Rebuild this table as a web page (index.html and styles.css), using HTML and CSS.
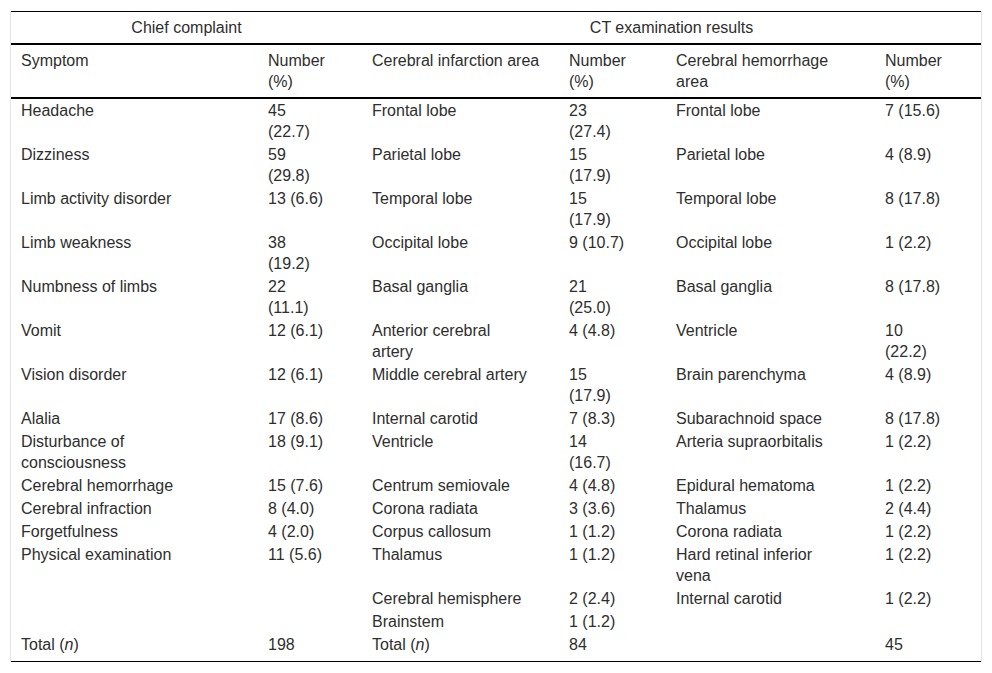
FILE: index.html
```html
<!DOCTYPE html>
<html lang="en">
<head>
<meta charset="utf-8">
<title>Table</title>
<link rel="stylesheet" href="styles.css">
</head>
<body>
<div class="wrap">
<table class="data">
<colgroup>
<col class="c1"><col class="c2"><col class="c3"><col class="c4"><col class="c5"><col class="c6">
</colgroup>
<thead>
<tr class="group">
<th colspan="2">Chief complaint</th>
<th colspan="4">CT examination results</th>
</tr>
<tr class="heads">
<th>Symptom</th><th>Number (%)</th><th>Cerebral infarction area</th><th>Number (%)</th><th>Cerebral hemorrhage area</th><th>Number (%)</th>
</tr>
</thead>
<tbody>
<tr><td>Headache</td><td>45 (22.7)</td><td>Frontal lobe</td><td>23 (27.4)</td><td>Frontal lobe</td><td>7 (15.6)</td></tr>
<tr><td>Dizziness</td><td>59 (29.8)</td><td>Parietal lobe</td><td>15 (17.9)</td><td>Parietal lobe</td><td>4 (8.9)</td></tr>
<tr><td>Limb activity disorder</td><td>13 (6.6)</td><td>Temporal lobe</td><td>15 (17.9)</td><td>Temporal lobe</td><td>8 (17.8)</td></tr>
<tr><td>Limb weakness</td><td>38 (19.2)</td><td>Occipital lobe</td><td>9 (10.7)</td><td>Occipital lobe</td><td>1 (2.2)</td></tr>
<tr><td>Numbness of limbs</td><td>22 (11.1)</td><td>Basal ganglia</td><td>21 (25.0)</td><td>Basal ganglia</td><td>8 (17.8)</td></tr>
<tr><td>Vomit</td><td>12 (6.1)</td><td>Anterior cerebral artery</td><td>4 (4.8)</td><td>Ventricle</td><td>10 (22.2)</td></tr>
<tr><td>Vision disorder</td><td>12 (6.1)</td><td>Middle cerebral artery</td><td>15 (17.9)</td><td>Brain parenchyma</td><td>4 (8.9)</td></tr>
<tr><td>Alalia</td><td>17 (8.6)</td><td>Internal carotid</td><td>7 (8.3)</td><td>Subarachnoid space</td><td>8 (17.8)</td></tr>
<tr><td>Disturbance of consciousness</td><td>18 (9.1)</td><td>Ventricle</td><td>14 (16.7)</td><td>Arteria supraorbitalis</td><td>1 (2.2)</td></tr>
<tr><td>Cerebral hemorrhage</td><td>15 (7.6)</td><td>Centrum semiovale</td><td>4 (4.8)</td><td>Epidural hematoma</td><td>1 (2.2)</td></tr>
<tr><td>Cerebral infraction</td><td>8 (4.0)</td><td>Corona radiata</td><td>3 (3.6)</td><td>Thalamus</td><td>2 (4.4)</td></tr>
<tr><td>Forgetfulness</td><td>4 (2.0)</td><td>Corpus callosum</td><td>1 (1.2)</td><td>Corona radiata</td><td>1 (2.2)</td></tr>
<tr><td>Physical examination</td><td>11 (5.6)</td><td>Thalamus</td><td>1 (1.2)</td><td>Hard retinal inferior vena</td><td>1 (2.2)</td></tr>
<tr><td></td><td></td><td>Cerebral hemisphere</td><td>2 (2.4)</td><td>Internal carotid</td><td>1 (2.2)</td></tr>
<tr><td></td><td></td><td>Brainstem</td><td>1 (1.2)</td><td></td><td></td></tr>
<tr class="total"><td>Total (<i>n</i>)</td><td>198</td><td>Total (<i>n</i>)</td><td>84</td><td></td><td>45</td></tr>
</tbody>
</table>
</div>
</body>
</html>
```

FILE: styles.css
```css
html, body {
  margin: 0;
  padding: 0;
  background: #ffffff;
}

body {
  font-family: "Liberation Sans", Arial, sans-serif;
  font-size: 16px;
  color: #2e2e2e;
}

.wrap {
  margin: 11px 10px 0 10px;
  width: 970px;
  border-left: 1px solid #e4e4e4;
  border-right: 1px solid #e4e4e4;
}

.data {
  width: 100%;
  table-layout: fixed;
  border-collapse: collapse;
  border-top: 1px solid #000;
  border-bottom: 1px solid #000;
  line-height: 21px;
}

.c1 { width: 247px; }
.c2 { width: 104px; }
.c3 { width: 197px; }
.c4 { width: 107px; }
.c5 { width: 209px; }
.c6 { width: 106px; }

.data th {
  font-weight: normal;
  text-align: left;
  vertical-align: top;
  padding: 5px 17px 5px 10px;
}

.data .group th {
  text-align: center;
  padding: 5px 10px;
  border-bottom: 2px solid #000;
}

.data .heads th {
  border-bottom: 2px solid #000;
}

.data td {
  vertical-align: top;
  text-align: left;
  padding: 1px 30px 1px 10px;
}

.data td:nth-child(even),
.data .heads th:nth-child(even) {
  padding-right: 36px;
}

.data .total td {
  padding-bottom: 6px;
}
```
